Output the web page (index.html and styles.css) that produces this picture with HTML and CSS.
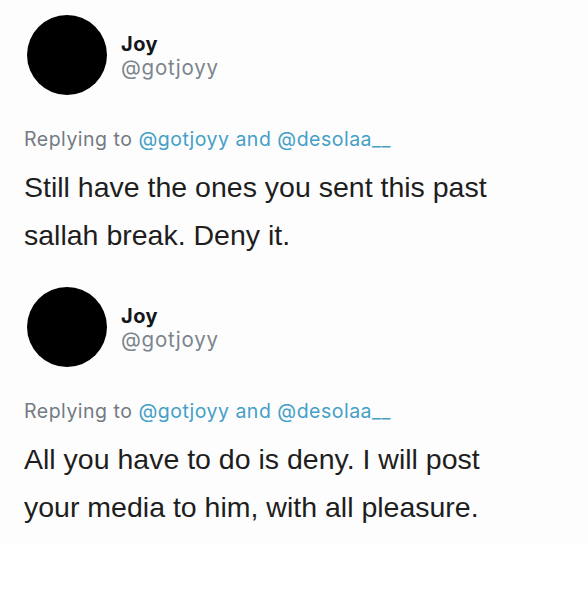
FILE: index.html
```html
<!DOCTYPE html>
<html lang="en">
<head>
<meta charset="utf-8">
<title>Joy replies</title>
<link rel="stylesheet" href="styles.css">
</head>
<body>
<main class="thread">
  <article class="tweet">
    <header class="tweet-head">
      <div class="avatar"></div>
      <div class="user">
        <div class="user-name">Joy</div>
        <div class="user-handle">@gotjoyy</div>
      </div>
    </header>
    <p class="reply-to">Replying to <a class="mention">@gotjoyy</a> <span class="mention">and</span> <a class="mention">@desolaa__</a></p>
    <p class="tweet-text">Still have the ones you sent this past<br>sallah break. Deny it.</p>
  </article>
  <article class="tweet">
    <header class="tweet-head">
      <div class="avatar"></div>
      <div class="user">
        <div class="user-name">Joy</div>
        <div class="user-handle">@gotjoyy</div>
      </div>
    </header>
    <p class="reply-to">Replying to <a class="mention">@gotjoyy</a> <span class="mention">and</span> <a class="mention">@desolaa__</a></p>
    <p class="tweet-text">All you have to do is deny. I will post<br>your media to him, with all pleasure.</p>
  </article>
</main>
</body>
</html>
```

FILE: styles.css
```css
html, body {
  margin: 0;
  padding: 0;
  background: #ffffff;
}

body {
  width: 588px;
  height: 592px;
  overflow: hidden;
  font-family: Inter, "Liberation Sans", sans-serif;
  color: #1b1b1b;
}

.thread {
  display: flex;
  flex-direction: column;
}

.tweet {
  height: 272px;
  box-sizing: border-box;
  padding: 15px 24px 0 24px;
  background: #fdfdfd;
}

.tweet-head {
  display: flex;
  align-items: flex-start;
  gap: 14px;
}

.avatar {
  width: 80px;
  height: 80px;
  margin-left: 3px;
  border-radius: 50%;
  background: #000;
  flex: none;
}

.user {
  padding-top: 17px;
}

.user-name {
  font-size: 20px;
  line-height: 24px;
  font-weight: 700;
  letter-spacing: 0.5px;
  color: #14171a;
}

.user-handle {
  font-size: 20.5px;
  line-height: 24px;
  letter-spacing: 0.8px;
  color: #7b848c;
}

.reply-to {
  margin: 32px 0 0 0;
  font-size: 19.5px;
  line-height: 24px;
  letter-spacing: 0.5px;
  color: #737b83;
  white-space: nowrap;
}

.mention {
  color: #44a0c6;
  text-decoration: none;
}

.tweet-text {
  margin: 12px 0 0 0;
  font-family: "Liberation Sans", Arial, sans-serif;
  font-size: 28.5px;
  line-height: 48px;
  color: #1e1e1e;
  white-space: nowrap;
}
```
